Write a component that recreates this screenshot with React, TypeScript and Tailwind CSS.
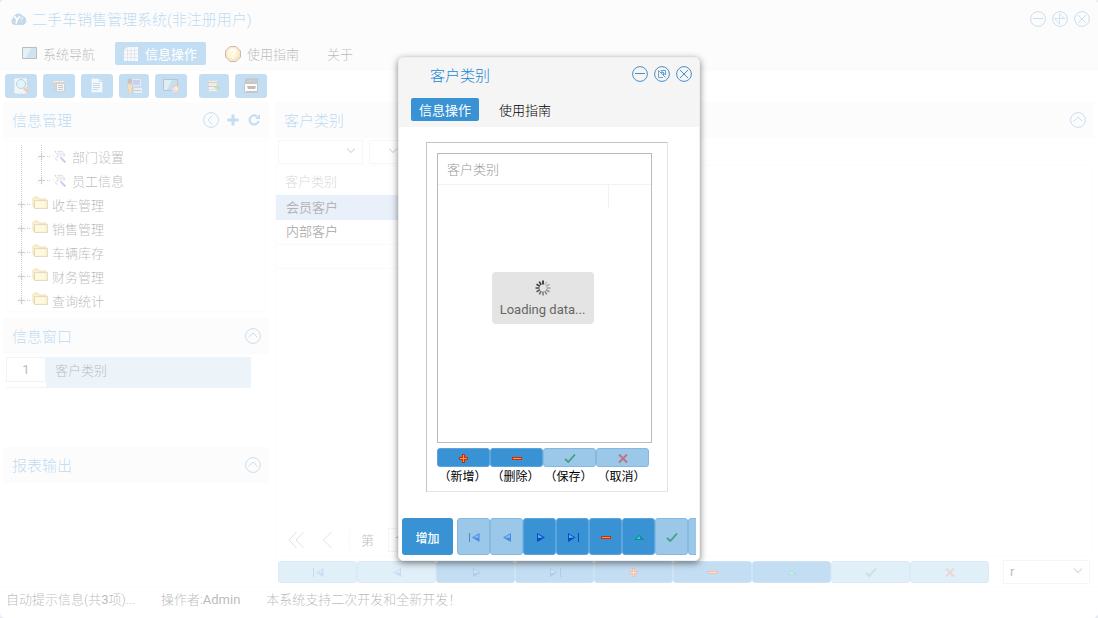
import type { ReactNode } from "react";
import clsx from "clsx";

type NavKind = "first" | "prev" | "next" | "last" | "add" | "remove" | "edit" | "save" | "cancel";

const navItems: { kind: NavKind; label: string; disabled?: boolean }[] = [
  { kind: "first", label: "首条", disabled: true },
  { kind: "prev", label: "上一条", disabled: true },
  { kind: "next", label: "下一条" },
  { kind: "last", label: "末条" },
  { kind: "add", label: "新增" },
  { kind: "remove", label: "删除" },
  { kind: "edit", label: "编辑" },
  { kind: "save", label: "保存", disabled: true },
  { kind: "cancel", label: "取消", disabled: true }
];

const treeItems = [
  { label: "部门设置", level: 2, last: false },
  { label: "员工信息", level: 2, last: true },
  { label: "收车管理", level: 1, last: false },
  { label: "销售管理", level: 1, last: false },
  { label: "车辆库存", level: 1, last: false },
  { label: "财务管理", level: 1, last: false },
  { label: "查询统计", level: 1, last: true }
];

function NavIcon({ kind }: { kind: NavKind }) {
  return (
    <svg width="16" height="16" viewBox="0 0 16 16" className="shrink-0">
      {kind === "first" && (
        <>
          <path d="M3 4h1v9H3z" fill="#0b5fd0" />
          <path d="M13.500 4v9L6 8.500z" fill="#1464d8" />
          <path d="M12.500 5.500v3.500L7.500 8.500z" fill="#6db6ff" />
        </>
      )}
      {kind === "prev" && (
        <>
          <path d="M12 4v9L4 8.500z" fill="#1464d8" />
          <path d="M11 5.500v3.500L5.500 8.500z" fill="#6db6ff" />
        </>
      )}
      {kind === "next" && (
        <>
          <path d="M5 4v9l8-4.500z" fill="#0a48bc" />
          <path d="M6 5.500v3.500l5-.5z" fill="#56b4ff" />
        </>
      )}
      {kind === "last" && (
        <>
          <path d="M3 4v9l7.500-4.500z" fill="#0a48bc" />
          <path d="M4 5.500v3.500l5-.5z" fill="#56b4ff" />
          <path d="M13 4h1v9h-1z" fill="#0a48bc" />
        </>
      )}
      {kind === "add" && (
        <>
          <path d="M6 4h3v3h3v3H9v3H6v-3H3V7h3z" fill="#d62a00" />
          <path d="M7.500 5v7M4 8.500h7" stroke="#ff9a3c" />
        </>
      )}
      {kind === "remove" && (
        <>
          <path d="M3 7h10v3H3z" fill="#d62a00" />
          <path d="M4 8.500h8" stroke="#ff9a3c" />
        </>
      )}
      {kind === "edit" && (
        <>
          <path d="M3 11h10.500L8.200 6z" fill="#0a8f96" />
          <path d="M5.500 10h4L8.200 7z" fill="#2fd8c8" />
        </>
      )}
      {kind === "save" && <path d="M3 9l3.300 3L13 4.500" fill="none" stroke="#118040" strokeWidth="1.800" />}
      {kind === "cancel" && <path d="M4 4.500l8 8M12 4.500l-8 8" stroke="#d83a3a" strokeWidth="1.800" />}
    </svg>
  );
}

function NavButton({
  kind,
  label,
  disabled,
  className
}: {
  kind: NavKind;
  label: string;
  disabled?: boolean;
  className?: string;
}) {
  return (
    <button
      aria-label={label}
      disabled={disabled}
      className={clsx(
        "flex items-center justify-center rounded-[3px] border",
        disabled ? "border-[#84b9e2] bg-[#9bc8e9]" : "border-[#5ba5da] bg-[#3892d3]",
        className
      )}
    >
      <span className={clsx("flex", disabled && "opacity-60")}>
        <NavIcon kind={kind} />
      </span>
    </button>
  );
}

function CircleButton({ label, children }: { label: string; children: ReactNode }) {
  return (
    <button aria-label={label} className="h-4 w-4">
      <svg width="16" height="16" viewBox="0 0 16 16" fill="none" stroke="#4a8fc6">
        <circle cx="8" cy="8" r="7.400" />
        {children}
      </svg>
    </button>
  );
}

function WindowButtons({ maximized }: { maximized?: boolean }) {
  return (
    <div className="flex gap-1.5">
      <CircleButton label="最小化">
        <path d="M3 7.500h10" />
      </CircleButton>
      <CircleButton label="还原">
        {maximized ? (
          <path d="M2.500 7.500h11M7.500 2.500v11M7.500 2.500l5 5M2.500 7.500l5 5.500" strokeWidth=".8" />
        ) : (
          <path d="M7 4.500h4.500V9M4.500 7v4.500H9M4.500 4.500l7 7M4.500 7V4.500M6.500 6.500h3v3M7 4.500L11.500 9" strokeWidth=".8" />
        )}
      </CircleButton>
      <CircleButton label="关闭">
        <path d="M4 4l8 8M12 4l-8 8" />
      </CircleButton>
    </div>
  );
}

function CollapseUp() {
  return (
    <CircleButton label="折叠">
      <path d="M3.500 9.500L8 5l4.500 4.500" />
    </CircleButton>
  );
}

function PanelHeader({ title, children }: { title: string; children: ReactNode }) {
  return (
    <div className="flex h-9 shrink-0 items-center justify-between bg-[#f5f5f5] pr-2 pl-[9px]">
      <h2 className="pt-0.5 text-[15px] text-[#1a86d4]">{title}</h2>
      <div className="flex items-center gap-2">{children}</div>
    </div>
  );
}

function TreeGuide({ plus, end }: { plus?: boolean; end?: boolean }) {
  const width = plus ? 21 : 20;
  return (
    <svg width={width} height="24" viewBox={`0 0 ${width} 24`} className="shrink-0" stroke="#555">
      <path d={end ? "M10.500 0v12" : "M10.500 0v24"} strokeDasharray="1 1" />
      {plus && (
        <>
          <path d="M6 7h9v9H6z" fill="#f4f4f4" stroke="none" />
          <path d="M7 11.500h7M10.500 8v7" />
          <path d="M16 11.500h4" strokeDasharray="1 1" />
        </>
      )}
    </svg>
  );
}

function FolderIcon() {
  return (
    <svg width="16" height="16" viewBox="0 0 16 16" className="mb-1 shrink-0">
      <path d="M1 12V3.500L2.500 2H6l1.500 2H14v8.500H2.500z" fill="#f5cf50" stroke="#c9982c" />
      <path d="M2.500 5.500h13v8h-13z" fill="#f6d868" stroke="#a8823a" />
      <path d="M3.500 6.500h9v6h-9z" fill="#ffec98" />
    </svg>
  );
}

function ToolIcon() {
  return (
    <svg width="16" height="16" viewBox="0 0 16 16" className="shrink-0">
      <path d="M3 2l3 4-2 5M6 3l3-1 4 4-2 2" fill="none" stroke="#8a8a8a" strokeWidth="1.500" strokeDasharray="2 1" />
      <path d="M5 5l4-2 3 2-4 4z" fill="#c5cbd4" />
      <path d="M8.500 8.500l5 5" stroke="#8b30d8" strokeWidth="1.800" />
      <path d="M1 6l2 3 3 4" fill="none" stroke="#999" strokeDasharray="1 1" />
    </svg>
  );
}

const toolbarIcons: { label: string; width: string; icon: ReactNode }[] = [
  {
    label: "查询",
    width: "w-8",
    icon: (
      <>
        <path d="M1 0h13v16H1z" fill="#cfdbe8" stroke="#777" strokeDasharray="2 1" />
        <circle cx="8" cy="6" r="4.500" fill="#90def4" stroke="#3d5d80" />
        <path d="M11 10l4 4" stroke="#d8501c" strokeWidth="3" />
      </>
    )
  },
  {
    label: "属性",
    width: "w-8",
    icon: (
      <>
        <path d="M1.500 2.500h12v2h-12z" fill="#d0c8c0" stroke="#777" />
        <path d="M5.500 5.500h8v8h-8z" fill="#e0e0e0" stroke="#666" />
        <path d="M3 6v8" stroke="#555" strokeWidth="1.500" strokeDasharray="1 1" />
        <path d="M7 7.500h5M7 9.500h5M7 11.500h5" stroke="#60422c" />
      </>
    )
  },
  {
    label: "文档",
    width: "w-8",
    icon: (
      <>
        <path d="M2.500 .5h8l3 3v11h-11z" fill="#d4e8f8" stroke="#78a9d8" />
        <path d="M10.500 .5v3h3M4 5.500h7M4 7.500h7M4 9.500h7M4 11.500h5" stroke="#3f84c8" fill="none" />
      </>
    )
  },
  {
    label: "用户",
    width: "w-[30px]",
    icon: (
      <>
        <path d="M6.500 1.500h8v6h-8z" fill="#5060d8" stroke="#bbb" />
        <path d="M8 10h8v5H8z" fill="#c6c6c6" />
        <path d="M8 12.500h7" stroke="#555" />
        <circle cx="4" cy="3" r="2.500" fill="#4b3626" />
        <path d="M1.500 6h5v5h-1v5h-3v-5h-1z" fill="#e2892c" stroke="#7c5229" strokeWidth=".6" />
      </>
    )
  },
  {
    label: "视图",
    width: "w-8",
    icon: (
      <>
        <path d="M.5 1.500h14v11H.5z" fill="#4a98bc" stroke="#2d3840" />
        <path d="M1 2h8L4 12H1z" fill="#8cc6dc" />
        <circle cx="12.200" cy="11.500" r="3.500" fill="#f090b0" stroke="#a83878" />
        <path d="M12 8v3.500h3.500A3.500 3.500 0 0012 8z" fill="#f5c830" />
        <path d="M8.700 11.500h3.500V15a3.500 3.500 0 01-3.500-3.500z" fill="#50a4e8" />
      </>
    )
  },
  {
    label: "导入",
    width: "w-[30px]",
    icon: (
      <>
        <path d="M2.500 2.500h9v11h-9z" fill="#d2d2d2" stroke="#888" />
        <path d="M2 4.500h10M2 8.500h9" stroke="#555" />
        <path d="M3 6.500h8M3 11.500h8" stroke="#aaa" />
        <path d="M11.500 6.500v6M8.500 9.500h6" stroke="#279a2c" strokeWidth="2" />
      </>
    )
  },
  {
    label: "打印",
    width: "w-8",
    icon: (
      <>
        <path d="M3 1h12l-1 4H2z" fill="#555" stroke="#333" />
        <path d="M1.500 5.500h13v9h-13z" fill="#f6f6f6" stroke="#444" />
        <path d="M4 8h9l-1 3H5z" fill="#222" />
        <path d="M3 13.500h11" stroke="#333" />
      </>
    )
  }
];

function Combo({ label, value, className }: { label: string; value?: string; className?: string }) {
  return (
    <div className={clsx("relative shrink-0", className)}>
      <select
        aria-label={label}
        className="block h-6 w-full appearance-none border border-[#e2e2e2] bg-white px-1.5 font-normal text-[#111]"
      >
        <option>{value}</option>
      </select>
      <svg width="10" height="6" viewBox="0 0 10 6" className="pointer-events-none absolute top-2 right-[7px]">
        <path d="M1 .5l4 4 4-4" fill="none" stroke="#999" strokeWidth="1.300" />
      </svg>
    </div>
  );
}

function Sidebar() {
  return (
    <aside className="flex w-[266px] shrink-0 flex-col">
      <PanelHeader title="信息管理">
        <CircleButton label="收起">
          <path d="M9.500 3.500L5 8l4.500 4.500" />
        </CircleButton>
        <button aria-label="展开">
          <svg width="12" height="12" viewBox="0 0 12 12">
            <path d="M6 .5v11M.5 6h11" stroke="#3892d3" strokeWidth="3" />
          </svg>
        </button>
        <button aria-label="刷新">
          <svg width="14" height="14" viewBox="0 0 14 14">
            <path d="M10 3.500A4.500 4.500 0 1011.500 8" fill="none" stroke="#3892d3" strokeWidth="2.200" />
            <path d="M8 6h5V1z" fill="#3892d3" />
          </svg>
        </button>
      </PanelHeader>
      <ul className="mx-[3px] mt-0.5 h-[172px] overflow-hidden border border-[#f4f4f4] pt-1 pl-1">
        {treeItems.map((item) => (
          <li key={item.label} className="flex h-6 items-center">
            {item.level === 2 ? (
              <>
                <TreeGuide />
                <TreeGuide plus end={item.last} />
                <ToolIcon />
              </>
            ) : (
              <>
                <TreeGuide plus end={item.last} />
                <FolderIcon />
              </>
            )}
            <span className="pt-0.5 pl-1">{item.label}</span>
          </li>
        ))}
      </ul>

      <div className="mt-1.5 h-[129px]">
        <PanelHeader title="信息窗口">
          <CollapseUp />
        </PanelHeader>
        <div className="mt-[3px] mr-[18px] ml-[3px] flex h-[31px]">
          <div className="w-10 border-b border-[#c5dcee]">
            <div className="flex h-[25px] items-center justify-center border border-[#c0d9ee] font-normal">1</div>
          </div>
          <button className="flex-1 bg-[#c0daef] pb-1 pl-[9px] text-left">客户类别</button>
        </div>
      </div>

      <PanelHeader title="报表输出">
        <CollapseUp />
      </PanelHeader>
    </aside>
  );
}

function CustomerPanel() {
  return (
    <main className="flex min-w-0 flex-1 flex-col">
      <PanelHeader title="客户类别">
        <CollapseUp />
      </PanelHeader>
      <div className="mt-0.5 flex gap-1.5 pl-[3px]">
        <Combo label="字段" className="w-[85px]" />
        <Combo label="条件" className="w-9" />
      </div>
      <div className="mt-px mr-0.5 flex flex-1 flex-col border border-[#f4f4f4]">
        <table className="w-[200px] text-left">
          <thead>
            <tr className="h-[29px] text-[#777]">
              <th className="pt-0.5 pl-[9px] font-light">客户类别</th>
            </tr>
          </thead>
          <tbody className="font-normal text-black">
            <tr className="h-6 border-y border-[#a0cbeb] bg-[#b4cbec]">
              <td className="pt-0.5 pl-2.5">会员客户</td>
            </tr>
            <tr className="h-[25px] border-b border-[#eee]">
              <td className="pl-2.5">内部客户</td>
            </tr>
            <tr className="h-6 border-b border-[#eee]">
              <td />
            </tr>
          </tbody>
        </table>
        <div className="mt-auto flex h-8 items-center pl-3">
          <button aria-label="第一页">
            <svg width="16" height="18" viewBox="0 0 16 18" fill="none" stroke="#999">
              <path d="M8.500 1L1 9l7.500 8M15.500 1L8 9l7.500 8" />
            </svg>
          </button>
          <button aria-label="上一页" className="ml-[18px]">
            <svg width="11" height="18" viewBox="0 0 11 18" fill="none" stroke="#999">
              <path d="M9.500 1L1.500 9l8 8" />
            </svg>
          </button>
          <label htmlFor="page" className="ml-4 border-l border-[#eee] pt-0.5 pl-[11px]">
            第
          </label>
          <input id="page" defaultValue="1" className="ml-3.5 h-6 w-10 border border-[#ddd] pl-1.5 font-normal" />
        </div>
      </div>
      <div className="mt-[3px] mb-[3px] flex h-[23px] shrink-0 items-center pr-1 pl-[3px]">
        <div className="flex h-[22px] flex-1">
          {navItems.map((item) => (
            <NavButton key={item.kind} {...item} className="flex-1" />
          ))}
        </div>
        <Combo label="打印方式" value="r" className="ml-3.5 w-[87px]" />
      </div>
    </main>
  );
}

function Dialog() {
  const actions: { kind: NavKind; label: string; disabled?: boolean }[] = [
    { kind: "add", label: "新增" },
    { kind: "remove", label: "删除" },
    { kind: "save", label: "保存", disabled: true },
    { kind: "cancel", label: "取消", disabled: true }
  ];
  return (
    <section
      role="dialog"
      aria-label="客户类别"
      className="flex w-[302px] flex-col overflow-hidden rounded-[5px] border border-[#eee] bg-white shadow-[0_2px_7px_rgba(0,0,0,0.5)]"
    >
      <header className="h-[69px] bg-[#f5f5f5]">
        <div className="flex h-8 items-center justify-between pr-[7px] pl-[31px]">
          <h2 className="pt-1 text-[15px] text-[#1a86d4]">客户类别</h2>
          <WindowButtons />
        </div>
        <nav className="mt-2 flex items-center gap-3 pl-3">
          <button className="h-[23px] rounded-xs bg-[#3892d3] px-2 pt-0.5 font-normal text-white">信息操作</button>
          <button className="h-[23px] px-2 pt-0.5 text-black">使用指南</button>
        </nav>
      </header>

      <div className="mt-[15px] ml-[27px] h-[350px] w-[242px] border border-t-[#c4c4c4] border-r-[#e4e4e4] border-b-[#e4e4e4] border-l-[#c4c4c4] p-2.5">
        <div className="relative h-[290px] w-[215px] border border-[#bbb]">
          <table className="w-full text-left">
            <thead>
              <tr className="h-[30px] border-b border-[#f2f2f2] text-[#999]">
                <th colSpan={2} className="pt-0.5 pl-[9px] font-light">
                  客户类别
                </th>
              </tr>
            </thead>
            <tbody>
              <tr className="h-6">
                <td className="w-[170px] border-r border-[#f2f2f2]" />
                <td />
              </tr>
            </tbody>
          </table>
          <div className="absolute inset-0 flex items-center justify-center pr-1">
            <div className="flex h-[52px] w-[102px] flex-col items-center gap-1 rounded bg-[#e4e4e4] pt-2 text-[#666]">
              <svg width="16" height="16" viewBox="0 0 16 16" stroke="#111" strokeWidth="1.500">
                {Array.from({ length: 12 }).map((_, i) => (
                  <path key={i} d="M8 .5v4" opacity={i === 0 ? 1 : 0.1 + i * 0.07} transform={`rotate(${i * 30} 8 8)`} />
                ))}
              </svg>
              <span className="leading-5 font-normal">Loading data...</span>
            </div>
          </div>
        </div>
        <div className="mt-[5px] flex">
          {actions.map((item) => (
            <div key={item.kind} className="flex w-[53px] flex-col items-center">
              <NavButton {...item} className="h-[19px] w-full" />
              <span className="pr-0.5 text-xs leading-5 font-normal whitespace-nowrap text-black">（{item.label}）</span>
            </div>
          ))}
        </div>
      </div>

      <footer className="mt-[26px] mb-[5px] flex h-[37px] gap-1 overflow-hidden pr-[3px] pl-[3px]">
        <button className="w-[51px] shrink-0 rounded-[3px] bg-[#3892d3] pt-1 text-xs font-medium text-white">增加</button>
        <div className="flex flex-1 overflow-hidden">
          {navItems
            .filter((item) => item.kind !== "add")
            .map((item) => (
              <NavButton key={item.kind} {...item} className="w-[33px] shrink-0" />
            ))}
        </div>
      </footer>
    </section>
  );
}

export default function App() {
  return (
    <div className="relative h-screen min-h-[600px] bg-[#a3bcdc] font-['Roboto','Noto_Sans_CJK_SC',sans-serif] text-[13px] font-light text-[#111]">
      <div className="flex h-full flex-col overflow-hidden rounded-[5px] bg-white">
        <header className="bg-[#f5f5f5]">
          <div className="flex h-[38px] items-center pr-2 pl-2.5">
            <svg width="17" height="14" viewBox="0 0 17 14" className="mr-[5px]">
              <path d="M4 13a4 4 0 01-1-7 5.500 5.500 0 0110-2 4.700 4.700 0 010 9z" fill="#3e7fb4" />
              <path d="M4.500 4l2.500 4 3-4M7 8l-1 3.500" fill="none" stroke="#fff" strokeWidth="1.600" />
              <path d="M10 7l3-2-2 5" stroke="#9ccbe8" fill="none" />
            </svg>
            <h1 className="flex-1 pt-0.5 text-[15px] text-[#1a86d4]">二手车销售管理系统(非注册用户)</h1>
            <WindowButtons maximized />
          </div>
          <nav className="flex h-[33px] items-center pb-0.5 pl-3.5">
            <button className="flex h-[23px] items-center gap-1.5 px-2">
              <svg width="15" height="13" viewBox="0 0 15 13">
                <path d="M.5 .5h14v11H.5z" fill="#5fa4cc" stroke="#222" />
                <path d="M1 1h8L4 11H1z" fill="#a4d4e8" />
              </svg>
              <span className="pt-0.5">系统导航</span>
            </button>
            <button className="ml-3 flex h-[23px] items-center gap-1.5 rounded-xs bg-[#3892d3] pr-[9px] pl-2 text-white">
              <svg width="16" height="16" viewBox="0 0 16 16">
                <path d="M4 1h11v14H1V4z" fill="#e6f0f8" />
                <path d="M4.500 1v14M8 1v14M11.500 1v14M1 4.500h14M1 8h14M1 11.500h14" stroke="#8a98a8" strokeWidth=".7" />
              </svg>
              <span className="pt-0.5 font-normal">信息操作</span>
            </button>
            <button className="ml-[11px] flex h-[23px] items-center gap-1.5 px-2">
              <svg width="16" height="16" viewBox="0 0 16 16">
                <path d="M5 .5h6L15.500 5v6L11 15.500H5L.5 11V5z" fill="#f2ad34" stroke="#4a2010" />
                <circle cx="7.500" cy="7" r="5.500" fill="#fbdc8c" />
                <path d="M6 5.500q0-2 2-2t2 2q0 1-2 2.500v1M8 11v1.500" fill="none" stroke="#fff" strokeWidth="2" />
              </svg>
              <span className="pt-0.5">使用指南</span>
            </button>
            <button className="ml-3 h-[23px] px-2 pt-0.5">关于</button>
          </nav>
        </header>

        <div className="mt-[3px] mb-1 flex h-6 shrink-0 gap-1.5 pl-[5px]">
          {toolbarIcons.map((item, i) => (
            <button
              key={item.label}
              aria-label={item.label}
              className={clsx("flex items-center justify-center rounded-[3px] bg-[#3892d3]", item.width, i === 5 && "ml-1.5")}
            >
              <svg width="16" height="16" viewBox="0 0 16 16">
                {item.icon}
              </svg>
            </button>
          ))}
        </div>

        <div className="flex min-h-0 flex-1 gap-1.5 border-b border-[#f5f5f5] pr-1 pl-[3px]">
          <Sidebar />
          <CustomerPanel />
        </div>

        <footer className="flex h-[31px] shrink-0 items-center gap-[26px] pb-1.5 pl-1.5 whitespace-nowrap">
          <span>
            自动提示信息(共<span className="font-normal">3</span>项)...
          </span>
          <span>
            操作者:<span className="font-normal">Admin</span>
          </span>
          <span>本系统支持二次开发和全新开发！</span>
        </footer>
      </div>

      <div className="absolute inset-0 flex items-center justify-center overflow-hidden bg-white/70">
        <Dialog />
      </div>
    </div>
  );
}
